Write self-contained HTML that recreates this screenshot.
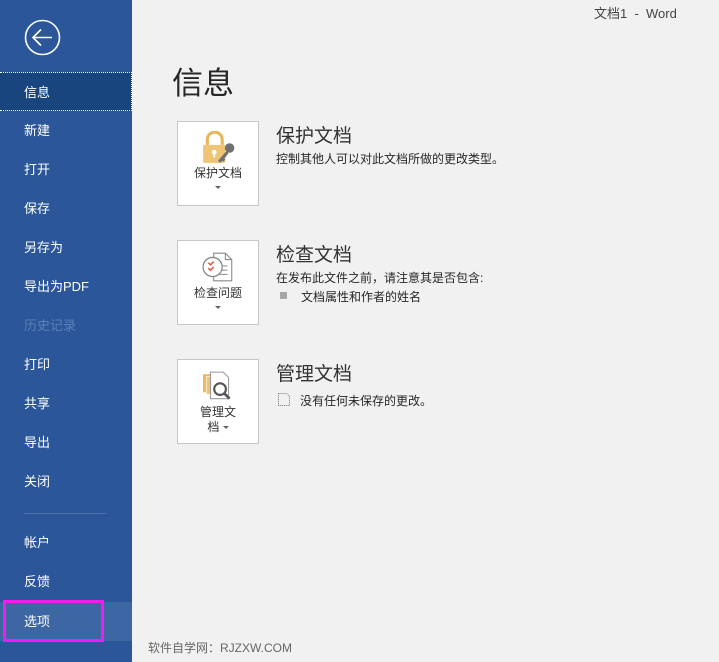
<!DOCTYPE html>
<html><head><meta charset="utf-8"><style>
*{margin:0;padding:0;box-sizing:border-box}
body{width:719px;height:662px;overflow:hidden;background:#f1f1f1;font-family:"Liberation Sans","Noto Sans CJK SC",sans-serif;position:relative;color:#262626}
#side{position:absolute;left:0;top:0;width:132px;height:662px;background:#2b579a}
.it{position:absolute;left:0;width:132px;height:39px;line-height:39px;padding-left:24px;color:#fff;font-size:13px}
.act{background:#19457f;border-top:1px dotted #fff;border-bottom:1px dotted #fff;border-right:1px dotted #fff}
.dis{color:#5a80b8}
.opt{background:#3d67a3}
.box{position:absolute;left:177px;width:82px;border:1px solid #c6c6c6;background:#fff;text-align:center;font-size:12px;color:#333}
.h{position:absolute;left:276px;font-size:19px;color:#333}
.p{position:absolute;left:276px;font-size:12px;color:#262626}
.tri{display:inline-block;width:0;height:0;border-left:3px solid transparent;border-right:3px solid transparent;border-top:3px solid #666;vertical-align:middle}
</style></head><body>
<div id="side">
<svg style="position:absolute;left:24px;top:19px" width="37" height="37" viewBox="0 0 37 37"><circle cx="18.5" cy="18.5" r="17" fill="none" stroke="#fff" stroke-width="1.6"/><path d="M9 18.5H28M17 10.5L9 18.5L17 26.5" fill="none" stroke="#fff" stroke-width="1.6"/></svg>
<div class="it act" style="top:72px">信息</div>
<div class="it" style="top:111px">新建</div>
<div class="it" style="top:150px">打开</div>
<div class="it" style="top:189px">保存</div>
<div class="it" style="top:228px">另存为</div>
<div class="it" style="top:267px">导出为PDF</div>
<div class="it dis" style="top:306px">历史记录</div>
<div class="it" style="top:345px">打印</div>
<div class="it" style="top:384px">共享</div>
<div class="it" style="top:423px">导出</div>
<div class="it" style="top:462px">关闭</div>
<div style="position:absolute;left:24px;top:513px;width:82px;height:1px;background:#4d74ae"></div>
<div class="it" style="top:523px">帐户</div>
<div class="it" style="top:562px">反馈</div>
<div class="it opt" style="top:602px">选项</div>
<div style="position:absolute;left:3px;top:600px;width:101px;height:42px;border:3px solid #f01cf0"></div>
</div>
<div style="position:absolute;left:594px;top:3px;font-size:13px;color:#444">文档1 &nbsp;- &nbsp;Word</div>
<div style="position:absolute;left:172px;top:58px;font-size:31px;color:#262626">信息</div>

<div class="box" style="top:121px;height:85px">
<svg style="position:absolute;left:23px;top:9px" width="36" height="34" viewBox="0 0 34 32"><path d="M6 13V8a7 7 0 0 1 14 0v5" fill="none" stroke="#e8b860" stroke-width="3"/><rect x="2" y="13" width="21" height="17" rx="1" fill="#f0c476"/><circle cx="12.5" cy="20" r="2.2" fill="#fff"/><rect x="11.7" y="20" width="1.6" height="5" fill="#fff"/><circle cx="27" cy="16" r="4.5" fill="#707070"/><path d="M24 19L16 28l2 2 2-2 1 1 2-2-1-1 4-5" fill="#707070"/></svg>
<div style="position:absolute;top:42px;width:100%">保护文档</div>
<div style="position:absolute;top:58px;width:100%"><span class="tri"></span></div>
</div>
<div class="h" style="top:121px">保护文档</div>
<div class="p" style="top:150px">控制其他人可以对此文档所做的更改类型。</div>

<div class="box" style="top:240px;height:85px">
<svg style="position:absolute;left:24px;top:11px" width="34" height="30" viewBox="0 0 32 28"><path d="M11 1h11l6 6v20H11z" fill="#fff" stroke="#888"/><path d="M22 1v6h6" fill="none" stroke="#888"/><path d="M16 13h8M16 17h8M16 21h8" stroke="#999"/><circle cx="10" cy="14" r="9" fill="#fff" stroke="#888" stroke-width="1.2"/><path d="M6 10l2 2 3-3M6 15l2 2 3-3" fill="none" stroke="#e0553c" stroke-width="1.4"/></svg>
<div style="position:absolute;top:43px;width:100%">检查问题</div>
<div style="position:absolute;top:59px;width:100%"><span class="tri"></span></div>
</div>
<div class="h" style="top:240px">检查文档</div>
<div class="p" style="top:269px">在发布此文件之前，请注意其是否包含:</div>
<div style="position:absolute;left:280px;top:292px;width:7px;height:7px;background:#a6a6a6"></div>
<div class="p" style="left:301px;top:288px">文档属性和作者的姓名</div>

<div class="box" style="top:359px;height:85px">
<svg style="position:absolute;left:24px;top:11px" width="34" height="32" viewBox="0 0 32 30"><rect x="1" y="3" width="12" height="17" fill="#e8b860"/><rect x="4" y="5" width="12" height="17" fill="#f0c476" stroke="#fff" stroke-width=".6"/><path d="M8 1h12l5 5v20H8z" fill="#fff" stroke="#999"/><circle cx="17" cy="17" r="5.5" fill="#fff" stroke="#555" stroke-width="2"/><path d="M21 21l5 5" stroke="#555" stroke-width="2.5"/></svg>
<div style="position:absolute;top:43px;width:100%">管理文</div>
<div style="position:absolute;top:58px;width:100%">档 <span class="tri"></span></div>
</div>
<div class="h" style="top:359px">管理文档</div>
<svg style="position:absolute;left:277px;top:392px" width="14" height="15" viewBox="0 0 14 15"><path d="M1.5 1.5h8l3 3v9h-11z" fill="none" stroke="#777" stroke-dasharray="1 1"/></svg>
<div class="p" style="left:300px;top:392px">没有任何未保存的更改。</div>

<div style="position:absolute;left:148px;top:639px;font-size:12px;color:#666">软件自学网：RJZXW.COM</div>
</body></html>
